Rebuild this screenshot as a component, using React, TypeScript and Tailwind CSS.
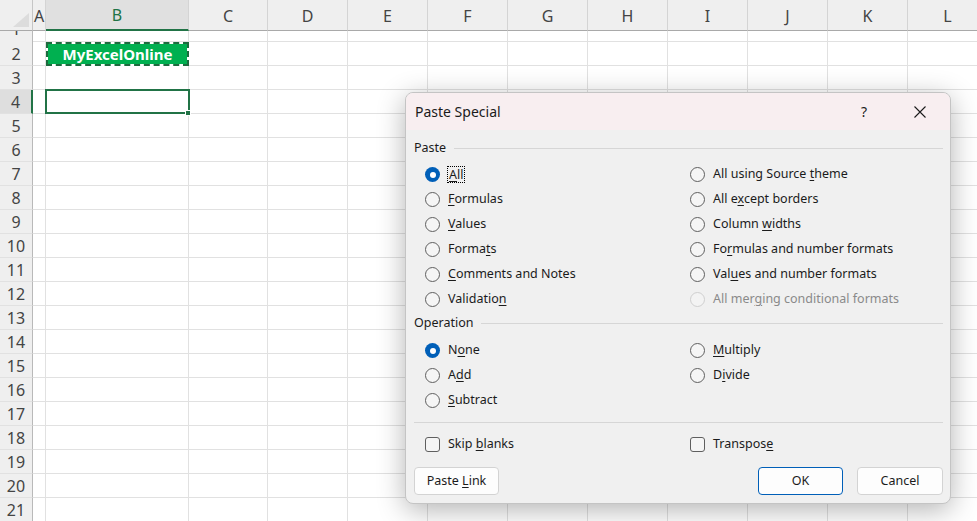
import React from "react";

const cols: { l: string; w: number }[] = [
  { l: "A", w: 13 },
  { l: "B", w: 143 },
  { l: "C", w: 79 },
  { l: "D", w: 80 },
  { l: "E", w: 80 },
  { l: "F", w: 80 },
  { l: "G", w: 80 },
  { l: "H", w: 80 },
  { l: "I", w: 80 },
  { l: "J", w: 80 },
  { l: "K", w: 80 },
  { l: "L", w: 80 },
];

const rows = Array.from({ length: 20 }, (_, i) => i + 2);

function U({ t, i, n = 1 }: { t: string; i: number; n?: number }) {
  return (
    <span>
      {t.slice(0, i)}
      <span className="underline underline-offset-2">{t.slice(i, i + n)}</span>
      {t.slice(i + n)}
    </span>
  );
}

function Radio({ state }: { state: "on" | "off" | "dis" }) {
  if (state === "on")
    return (
      <div className="w-[15px] h-[15px] rounded-full bg-[#005fb8] flex items-center justify-center shrink-0">
        <div className="w-[6px] h-[6px] rounded-full bg-white" />
      </div>
    );
  if (state === "dis")
    return <div className="w-[15px] h-[15px] rounded-full border border-[#cfcfcf] bg-[#f3f3f3] shrink-0" />;
  return <div className="w-[15px] h-[15px] rounded-full border border-[#5f5f5f] bg-[#f5f5f5] shrink-0" />;
}

function Opt({
  state,
  children,
  dis,
}: {
  state: "on" | "off" | "dis";
  children: React.ReactNode;
  dis?: boolean;
}) {
  return (
    <div className="flex items-center h-[25px]">
      <Radio state={state} />
      <div className={`ml-[8px] ${dis ? "text-[#8a8a8a]" : "text-[#1b1b1b]"}`}>{children}</div>
    </div>
  );
}

function Check({ children }: { children: React.ReactNode }) {
  return (
    <div className="flex items-center h-[25px]">
      <div className="w-[15px] h-[15px] rounded-[3px] border border-[#5f5f5f] bg-[#f5f5f5] shrink-0" />
      <div className="ml-[8px] text-[#1b1b1b]">{children}</div>
    </div>
  );
}

function GroupLabel({ t }: { t: string }) {
  return (
    <div className="flex items-center h-[18px]">
      <span className="text-[#1b1b1b]">{t}</span>
      <div className="flex-1 ml-[8px] h-px bg-[#d6d6d6]" />
    </div>
  );
}

function Btn({ children, primary, w }: { children: React.ReactNode; primary?: boolean; w: string }) {
  return (
    <div
      className={`${w} h-[28px] rounded-[4px] bg-[#fdfdfd] flex items-center justify-center text-[#1b1b1b] border ${
        primary ? "border-[#005fb8]" : "border-[#d3d3d3]"
      }`}
    >
      {children}
    </div>
  );
}

export default function App() {
  const sheetFont = { fontFamily: '"Noto Sans", "Open Sans", sans-serif' };
  return (
    <div className="relative w-[977px] h-[521px] overflow-hidden bg-white" style={sheetFont}>
      {/* Column headers */}
      <div className="flex h-[31px] w-max">
        <div className="w-[33px] h-[31px] bg-[#efefef] border-b border-[#a9a9a9] border-r border-r-[#c6c6c6] relative flex items-end justify-end pr-[3px] pb-[3px]">
          <svg width="16" height="14" viewBox="0 0 16 14">
            <polygon points="16,0 16,14 0,14" fill="#dcdcdc" />
          </svg>
        </div>
        {cols.map((c) => (
          <div
            key={c.l}
            style={{ width: c.w }}
            className={`h-[31px] flex items-end justify-center pb-[2px] text-[16px] text-[#444] border-r border-[#d4d4d4] overflow-hidden ${
              c.l === "B"
                ? "bg-[#e0e0e0] border-b-2 border-b-[#217346] text-[#217346]"
                : "bg-[#efefef] border-b border-b-[#a9a9a9]"
            }`}
          >
            <span className="leading-[24px]">{c.l}</span>
          </div>
        ))}
      </div>
      {/* Row 1 (partially scrolled) */}
      <div className="flex h-[11px] w-max overflow-hidden">
        <div className="w-[33px] h-[11px] bg-[#efefef] border-r border-[#b9b9b9] overflow-hidden">
          <div className="h-[24px] -mt-[14px] flex items-center justify-center text-[16px] text-[#444]">1</div>
        </div>
        {cols.map((c) => (
          <div key={c.l} style={{ width: c.w }} className="h-[11px] border-r border-b border-[#e1e1e1]" />
        ))}
      </div>
      {rows.map((r) => (
        <div key={r} className="flex h-[24px] w-max">
          <div
            className={`w-[33px] h-[24px] flex items-center justify-center text-[16px] text-[#444] border-b border-[#e1e1e1] ${
              r === 4 ? "bg-[#dedede] border-r-2 border-r-[#217346]" : "bg-[#efefef] border-r border-r-[#b9b9b9]"
            }`}
          >
            {r}
          </div>
          {cols.map((c) => {
            if (c.l === "B" && r === 2) {
              return (
                <div
                  key={c.l}
                  style={{ width: c.w }}
                  className="h-[24px] bg-[#00b050] bg-clip-padding border-2 border-dashed border-[#1d6b3e] flex items-center justify-center text-white font-bold text-[15px]"
                >
                  MyExcelOnline
                </div>
              );
            }
            if (c.l === "B" && r === 4) {
              return (
                <div key={c.l} style={{ width: c.w }} className="h-[24px] relative border-r border-b border-[#e1e1e1]">
                  <div className="absolute -left-[1px] -top-[1px] w-[145px] h-[25px] border-2 border-[#217346]" />
                  <div className="absolute -right-[3px] -bottom-[3px] w-[6px] h-[6px] bg-[#217346] border border-white" />
                </div>
              );
            }
            return <div key={c.l} style={{ width: c.w }} className="h-[24px] border-r border-b border-[#e1e1e1]" />;
          })}
        </div>
      ))}

      {/* Paste Special dialog */}
      <div
        className="absolute left-[405px] top-[92px] w-[546px] h-[412px] rounded-[8px] border border-[#c4c4c4] bg-[#f0f0f0] shadow-[0_6px_28px_rgba(0,0,0,0.30)] overflow-hidden text-[12.5px]"
        style={{ fontFamily: '"Noto Sans", "Open Sans", sans-serif' }}
      >
        <div className="h-[37px] bg-[#f8eef0] flex items-center pl-[9px]">
          <span className="text-[14px] text-[#1b1b1b]">Paste Special</span>
          <div className="flex-1" />
          <span className="text-[14px] text-[#1b1b1b] mr-[47px]">?</span>
          <svg width="12" height="12" viewBox="0 0 12 12" className="mr-[24px]">
            <path d="M0.5 0.5 L11.5 11.5 M11.5 0.5 L0.5 11.5" stroke="#1b1b1b" strokeWidth="1.1" />
          </svg>
        </div>
        <div className="pl-[8px] pr-[7px] pt-[9px]">
          <GroupLabel t="Paste" />
          <div className="flex pl-[11px] pt-[5px]">
            <div className="w-[265px] flex flex-col">
              <div className="flex items-center h-[25px]">
                <Radio state="on" />
                <div className="ml-[7px] text-[#1b1b1b] border border-dotted border-black px-[1px] leading-[15px]">
                  <U t="All" i={0} />
                </div>
              </div>
              <Opt state="off"><U t="Formulas" i={0} /></Opt>
              <Opt state="off"><U t="Values" i={0} /></Opt>
              <Opt state="off"><U t="Formats" i={5} /></Opt>
              <Opt state="off"><U t="Comments and Notes" i={0} /></Opt>
              <Opt state="off"><U t="Validation" i={9} /></Opt>
            </div>
            <div className="flex flex-col">
              <Opt state="off"><U t="All using Source theme" i={17} /></Opt>
              <Opt state="off"><U t="All except borders" i={5} /></Opt>
              <Opt state="off"><U t="Column widths" i={7} /></Opt>
              <Opt state="off"><U t="Formulas and number formats" i={2} /></Opt>
              <Opt state="off"><U t="Values and number formats" i={3} /></Opt>
              <Opt state="dis" dis><U t="All merging conditional formats" i={7} /></Opt>
            </div>
          </div>
          <div className="pt-[2px]">
            <GroupLabel t="Operation" />
          </div>
          <div className="flex pl-[11px] pt-[6px]">
            <div className="w-[265px] flex flex-col">
              <Opt state="on"><U t="None" i={1} /></Opt>
              <Opt state="off"><U t="Add" i={1} /></Opt>
              <Opt state="off"><U t="Subtract" i={0} /></Opt>
            </div>
            <div className="flex flex-col">
              <Opt state="off"><U t="Multiply" i={0} /></Opt>
              <Opt state="off"><U t="Divide" i={1} /></Opt>
            </div>
          </div>
          <div className="h-px bg-[#d6d6d6] mt-[9px]" />
          <div className="flex pl-[11px] pt-[9px]">
            <div className="w-[265px]">
              <Check><U t="Skip blanks" i={5} /></Check>
            </div>
            <Check><U t="Transpose" i={8} /></Check>
          </div>
          <div className="flex items-center pt-[10px]">
            <Btn w="w-[85px]"><U t="Paste Link" i={6} /></Btn>
            <div className="flex-1" />
            <Btn w="w-[85px]" primary>OK</Btn>
            <div className="w-[14px]" />
            <Btn w="w-[86px]">Cancel</Btn>
          </div>
        </div>
      </div>
    </div>
  );
}
